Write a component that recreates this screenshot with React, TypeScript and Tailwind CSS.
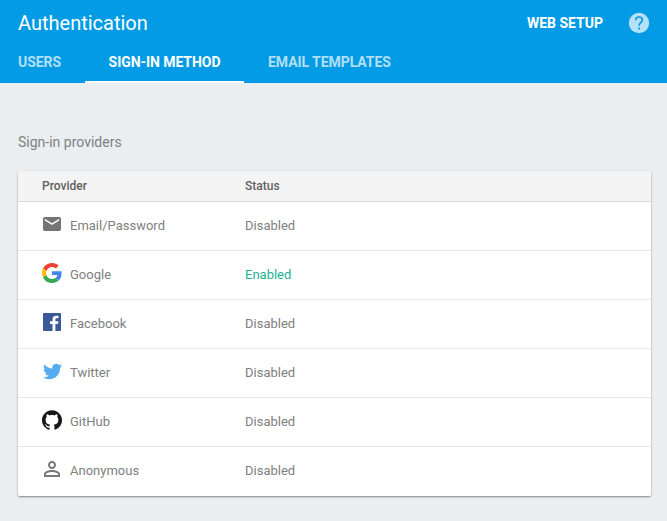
import React from "react";

type Provider = { name: string; enabled?: boolean; icon: React.ReactNode };

const providers: Provider[] = [
  { name: "Email/Password", icon: (
    <svg viewBox="2 4 20 16" preserveAspectRatio="none" className="h-[14px] w-[18px]" fill="#757575"><path d="M20 4H4c-1.1 0-2 .9-2 2v12c0 1.1.9 2 2 2h16c1.1 0 2-.9 2-2V6c0-1.1-.9-2-2-2zm0 4l-8 5-8-5V6l8 5 8-5v2z" /></svg>
  ) },
  { name: "Google", enabled: true, icon: (
    <svg viewBox="0 0 48 48" className="size-5">
      <path fill="#ea4335" d="M24 9.5c3.54 0 6.71 1.22 9.21 3.6l6.85-6.85C35.9 2.38 30.47 0 24 0 14.62 0 6.51 5.38 2.56 13.22l7.98 6.19C12.43 13.72 17.74 9.5 24 9.5z" />
      <path fill="#4285f4" d="M46.98 24.55c0-1.57-.15-3.09-.38-4.55H24v9.02h12.94c-.58 2.96-2.26 5.48-4.78 7.18l7.73 6c4.51-4.18 7.09-10.36 7.09-17.65z" />
      <path fill="#fbbc05" d="M10.53 28.59A14.5 14.5 0 0 1 9.77 24c0-1.6.27-3.14.76-4.59l-7.98-6.19A23.9 23.9 0 0 0 0 24c0 3.88.92 7.54 2.56 10.78l7.97-6.19z" />
      <path fill="#34a853" d="M24 48c6.48 0 11.93-2.13 15.89-5.81l-7.73-6c-2.15 1.45-4.92 2.3-8.16 2.3-6.26 0-11.57-4.22-13.47-9.91l-7.98 6.19C6.51 42.62 14.62 48 24 48z" />
    </svg>
  ) },
  { name: "Facebook", icon: (
    <svg viewBox="0 0 18 18" className="size-[18px]"><path fill="#3b5998" d="M1 0h16a1 1 0 0 1 1 1v16a1 1 0 0 1-1 1h-4.600v-7h2.600l.4-2.700h-3V6.600c0-.8.2-1.300 1.350-1.300H15.500V2.900c-.25 0-1.200-.1-2.300-.1-2.200 0-3.700 1.300-3.700 3.700v1.800H7V11h2.500v7H1a1 1 0 0 1-1-1V1a1 1 0 0 1 1-1z" /></svg>
  ) },
  { name: "Twitter", icon: (
    <svg viewBox="0 0 24 24" className="mt-[2px] size-[19px]" fill="#55acee"><path d="M23.953 4.57a10 10 0 0 1-2.825.775 4.958 4.958 0 0 0 2.163-2.723c-.951.555-2.005.959-3.127 1.184a4.92 4.92 0 0 0-8.384 4.482C7.69 8.095 4.067 6.13 1.64 3.162a4.822 4.822 0 0 0-.666 2.475c0 1.71.87 3.213 2.188 4.096a4.904 4.904 0 0 1-2.228-.616v.06a4.923 4.923 0 0 0 3.946 4.827 4.996 4.996 0 0 1-2.212.085 4.936 4.936 0 0 0 4.604 3.417 9.867 9.867 0 0 1-6.102 2.105c-.39 0-.779-.023-1.17-.067a13.995 13.995 0 0 0 7.557 2.209c9.053 0 13.998-7.496 13.998-13.985 0-.21 0-.42-.015-.63A9.935 9.935 0 0 0 24 4.59z" /></svg>
  ) },
  { name: "GitHub", icon: (
    <svg viewBox="0 0 24 24" className="size-5" fill="#191717"><path d="M12 .297c-6.63 0-12 5.373-12 12 0 5.303 3.438 9.8 8.205 11.385.6.113.82-.258.82-.577 0-.285-.01-1.04-.015-2.04-3.338.724-4.042-1.61-4.042-1.61C4.422 18.07 3.633 17.7 3.633 17.7c-1.087-.744.084-.729.084-.729 1.205.084 1.838 1.236 1.838 1.236 1.07 1.835 2.809 1.305 3.495.998.108-.776.417-1.305.76-1.605-2.665-.3-5.466-1.332-5.466-5.93 0-1.31.465-2.38 1.235-3.22-.135-.303-.54-1.523.105-3.176 0 0 1.005-.322 3.3 1.23.96-.267 1.98-.399 3-.405 1.02.006 2.04.138 3 .405 2.28-1.552 3.285-1.23 3.285-1.23.645 1.653.24 2.873.12 3.176.765.84 1.23 1.91 1.23 3.22 0 4.61-2.805 5.625-5.475 5.92.42.36.81 1.096.81 2.22 0 1.606-.015 2.896-.015 3.286 0 .315.21.69.825.57C20.565 22.092 24 17.592 24 12.297c0-6.627-5.373-12-12-12" /></svg>
  ) },
  { name: "Anonymous", icon: (
    <svg viewBox="0 0 24 24" className="size-6" fill="#757575"><path d="M12 5.900a2.100 2.100 0 1 1 0 4.200 2.100 2.100 0 0 1 0-4.200m0 9c2.970 0 6.100 1.460 6.100 2.100v1.100H5.900V17c0-.64 3.130-2.100 6.100-2.100M12 4C9.790 4 8 5.790 8 8s1.790 4 4 4 4-1.790 4-4-1.790-4-4-4zm0 9c-2.670 0-8 1.340-8 4v3h16v-3c0-2.660-5.330-4-8-4z" /></svg>
  ) },
];

export default function App() {
  return (
    <div className="flex h-[521px] w-[667px] flex-col overflow-hidden bg-[#eaeef1] font-['Roboto',sans-serif] text-[13px] text-[#808080]">
      <header className="flex h-[83px] shrink-0 flex-col bg-[#039be5] text-white">
        <div className="flex h-[43px] items-center pt-[3px] pr-4 pl-[18px]">
          <h1 className="flex-1 text-[20px] leading-6">Authentication</h1>
          <button className="mr-[24px] pb-px text-[14px] leading-5 font-bold">WEB SETUP</button>
          <svg viewBox="0 0 24 24" className="size-6">
            <circle cx="12" cy="12" r="10.2" fill="#b3e1f7" />
            <path d="M8.700 9.200C8.700 7.100 10 6 12 6s3.300 1.200 3.300 3c0 2.700-3.200 2.800-3.200 5.700" fill="none" stroke="#039be5" strokeWidth="1.700" />
            <path d="M11.200 16.600h1.800v1.800h-1.800z" fill="#039be5" />
          </svg>
        </div>
        <nav className="flex h-10 text-[14px] leading-[38px] font-bold tracking-[-0.06px]">
          <span className="w-[85px] pl-[18px] text-white/70">USERS</span>
          <span className="w-[159px] border-b-2 border-white text-center">SIGN-IN METHOD</span>
          <span className="pl-6 text-white/70">EMAIL TEMPLATES</span>
        </nav>
      </header>
      <main className="flex flex-col pt-[49px] pr-4 pl-[18px]">
        <h2 className="mb-[19px] text-[14px] leading-5">Sign-in providers</h2>
        <section className="rounded-[2px] bg-white shadow-[0_1px_2px_rgba(0,0,0,0.45)]">
          <div className="flex h-[31px] items-center rounded-t-[2px] border-b border-[#d9d9d9] bg-[#f4f4f4] pl-6 text-[12px] font-medium text-[#616161]">
            <span className="w-[203px]">Provider</span><span>Status</span>
          </div>
          {providers.map((p) => (
            <div key={p.name} className="flex h-[49px] items-center border-b border-[#e8e8e8] pl-6 last:rounded-b-[2px] last:border-white">
              <span className="mb-[5px] flex w-5 shrink-0 items-center justify-center [&>svg]:shrink-0">{p.icon}</span>
              <span className="mr-2 w-[175px] shrink-0 pl-2">{p.name}</span>
              <span className={p.enabled ? "text-[#1bb193]" : ""}>{p.enabled ? "Enabled" : "Disabled"}</span>
            </div>
          ))}
        </section>
      </main>
    </div>
  );
}
